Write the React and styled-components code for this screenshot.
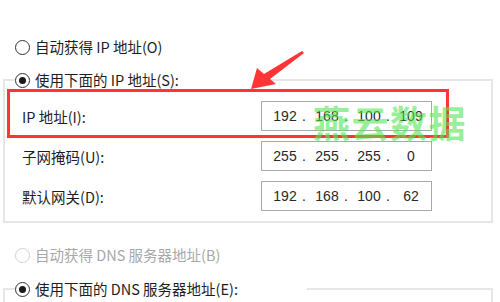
import React from 'react';
import styled, { createGlobalStyle } from 'styled-components';

const GlobalStyle = createGlobalStyle`
  html, body {
    margin: 0;
    padding: 0;
    background: #fff;
  }
  body {
    font-family: "Noto Sans CJK SC", "Noto Sans", sans-serif;
  }
`;

const Page = styled.div`
  position: relative;
  width: 500px;
  height: 302px;
  overflow: hidden;
  background: #fff;
  padding-top: 37px;
  box-sizing: border-box;
  font-size: 14.5px;
  color: #1e1e1e;
`;

const RadioRow = styled.label`
  display: flex;
  align-items: center;
  gap: 5px;
  height: 20px;
  margin-left: ${(p) => p.$indent ?? 15}px;
  margin-top: ${(p) => p.$top ?? 0}px;
  color: ${(p) => (p.$disabled ? '#a8a8a8' : '#1e1e1e')};
  white-space: nowrap;
  line-height: 20px;
`;

const Circle = styled.span`
  position: relative;
  width: 13px;
  height: 13px;
  border-radius: 50%;
  border: 1px solid ${(p) => (p.$disabled ? '#d0d0d0' : '#333')};
  background: #fff;
  flex: none;

  &::after {
    content: '';
    display: ${(p) => (p.$checked ? 'block' : 'none')};
    position: absolute;
    left: 3px;
    top: 3px;
    width: 7px;
    height: 7px;
    border-radius: 50%;
    background: #1a1a1a;
  }
`;

const Group = styled.fieldset`
  margin: ${(p) => p.$top || 0}px 7px 0 3px;
  padding: 11px 0 10px 0;
  border: 2px solid #e6e6e6;
  min-width: 0;
`;

const Legend = styled.legend`
  margin-left: 10px;
  padding: 0;
  width: ${(p) => p.$width}px;
  height: 20px;
`;

const Rows = styled.div`
  display: flex;
  flex-direction: column;
  gap: 10px;
  padding-left: 17px;
`;

const Row = styled.div`
  display: flex;
  align-items: center;
  height: 30px;
`;

const Label = styled.span`
  width: 239px;
  white-space: nowrap;
`;

const AddressBox = styled.div`
  display: flex;
  align-items: center;
  box-sizing: border-box;
  width: 171px;
  height: 30px;
  padding-left: 11px;
  border: 1.5px solid #a9a9a9;
  font-family: "Liberation Sans", Arial, sans-serif;
  font-size: 14px;
  color: #2a2a2a;
`;

const Octet = styled.span`
  width: 24px;
  text-align: center;
  white-space: nowrap;
`;

const Dot = styled.span`
  box-sizing: border-box;
  width: 18px;
  padding-left: 5px;
`;

const Highlight = styled.div`
  position: absolute;
  left: 7px;
  top: 89px;
  width: 442px;
  height: 49px;
  box-sizing: border-box;
  border: 3px solid #ff3535;
  pointer-events: none;
`;

const Watermark = styled.div`
  position: absolute;
  left: 313px;
  top: 98px;
  font-size: 37px;
  font-weight: 700;
  letter-spacing: 1.5px;
  line-height: 48px;
  color: rgba(80, 230, 80, 0.6);
  white-space: nowrap;
  pointer-events: none;
`;

const Arrow = styled.svg`
  position: absolute;
  left: 0;
  top: 0;
  pointer-events: none;
`;

function Radio({ checked, disabled, children, indent, top }) {
  return (
    <RadioRow $disabled={disabled} $indent={indent} $top={top}>
      <Circle $checked={checked} $disabled={disabled} />
      {children}
    </RadioRow>
  );
}

function Address({ value }) {
  const parts = value.split('.');
  return (
    <AddressBox>
      {parts.map((part, i) => (
        <React.Fragment key={i}>
          <Octet>{part}</Octet>
          {i < parts.length - 1 && <Dot>.</Dot>}
        </React.Fragment>
      ))}
    </AddressBox>
  );
}

const fields = [
  { label: 'IP 地址(I):', value: '192.168.100.109' },
  { label: '子网掩码(U):', value: '255.255.255.0' },
  { label: '默认网关(D):', value: '192.168.100.62' },
];

export default function App() {
  return (
    <Page>
      <GlobalStyle />
      <Radio>自动获得 IP 地址(O)</Radio>
      <Group $top={13}>
        <Legend $width={250}>
          <Radio checked indent={0}>使用下面的 IP 地址(S):</Radio>
        </Legend>
        <Rows>
          {fields.map((f) => (
            <Row key={f.label}>
              <Label>{f.label}</Label>
              <Address value={f.value} />
            </Row>
          ))}
        </Rows>
      </Group>
      <Radio disabled top={22}>自动获得 DNS 服务器地址(B)</Radio>
      <Group $top={14}>
        <Legend $width={292}>
          <Radio checked indent={0}>使用下面的 DNS 服务器地址(E):</Radio>
        </Legend>
        <Rows>
          <Row />
        </Rows>
      </Group>

      <Highlight />
      <Watermark>燕云数据</Watermark>
      <Arrow width="500" height="302" viewBox="0 0 500 302">
        <polygon
          points="251,89 257,68 264,74 302,51 304,53 270,79 276,84"
          fill="#ff3535"
        />
      </Arrow>
    </Page>
  );
}
